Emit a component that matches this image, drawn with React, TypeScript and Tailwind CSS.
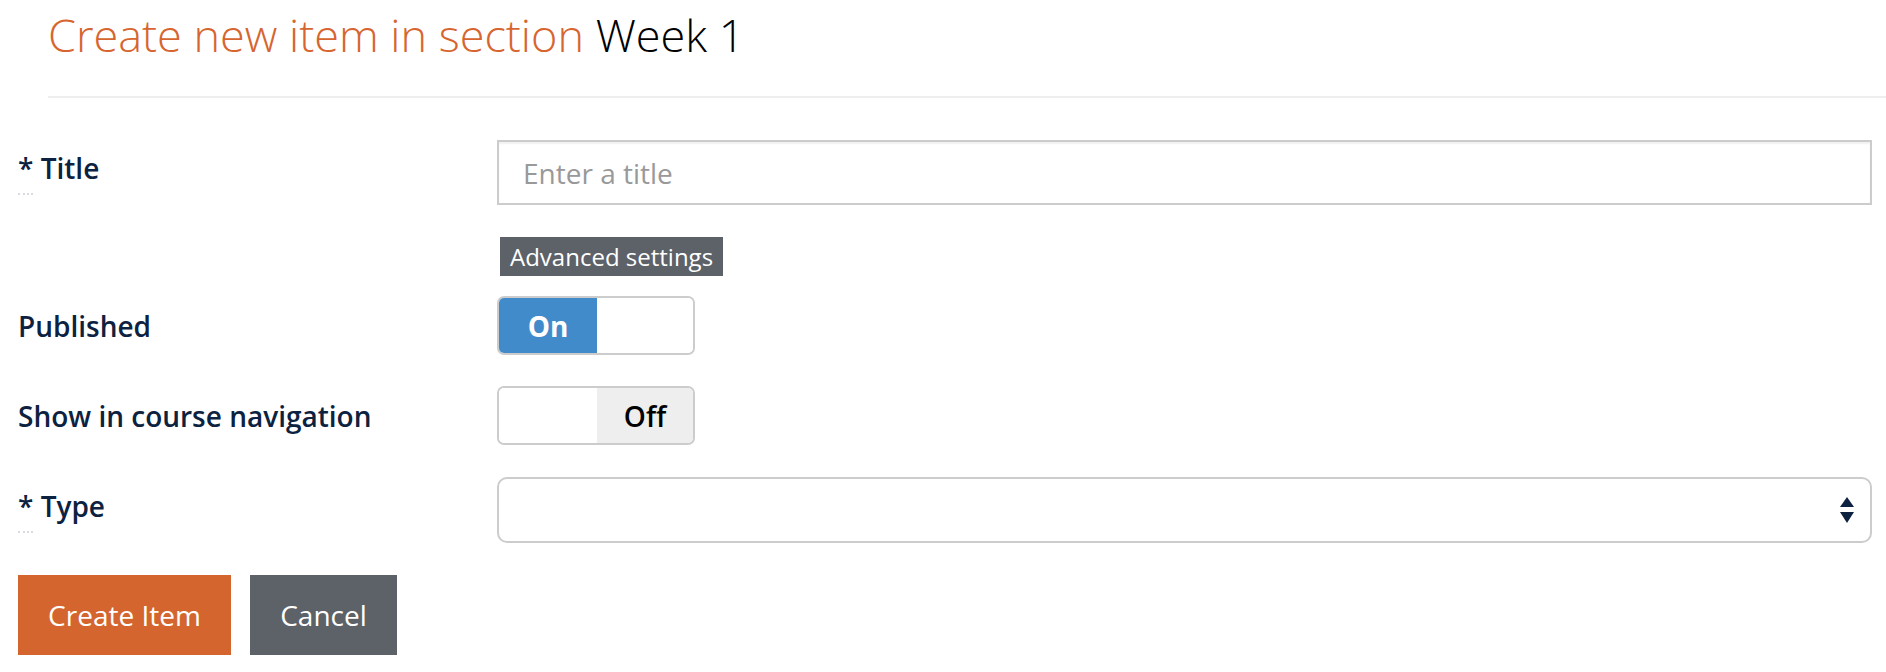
import React from "react";

const labelCls =
  "text-[28px] font-semibold text-[#0d2240] leading-[38px]";

function Req({ children }: { children: React.ReactNode }) {
  return (
    <span className={labelCls}>
      <span className="relative inline-block">
        *
        <span className="absolute left-0 right-0 -bottom-[8px] border-b-2 border-dotted border-[#d8dbe0]" />
      </span>{" "}
      {children}
    </span>
  );
}

function Toggle({ on }: { on: boolean }) {
  return (
    <div className="flex h-[59px] w-[198px] overflow-hidden rounded-[7px] border-2 border-[#cccccc] bg-white">
      {on ? (
        <>
          <div className="flex w-[98px] items-center justify-center bg-[#428bca] text-[28px] font-bold text-white">
            On
          </div>
          <div className="flex-1 bg-white" />
        </>
      ) : (
        <>
          <div className="w-[98px] bg-white" />
          <div className="flex flex-1 items-center justify-center bg-[#eeeeee] text-[28px] font-semibold text-black">
            Off
          </div>
        </>
      )}
    </div>
  );
}

export default function App() {
  return (
    <div
      className="min-h-[672px] w-full bg-white"
      style={{ fontFamily: '"Open Sans", "Noto Sans", sans-serif' }}
    >
      <div className="pl-[48px]">
        <h1 className="pt-[5px] text-[45px] font-light leading-[60px] text-[#d6652f]">
          Create new item in section <span className="text-black">Week 1</span>
        </h1>
        <div className="mt-[31px] h-[2px] bg-[#eeeeee]" />
      </div>

      <div className="flex flex-col pl-[18px] pr-[14px] pt-[42px]">
        <div className="grid grid-cols-[479px_1fr]">
          <div className="pt-[9px]">
            <Req>Title</Req>
          </div>
          <div className="flex h-[65px] items-center border-2 border-[#cccccc] bg-white pl-[24px] shadow-[inset_0_2px_2px_rgba(0,0,0,0.06)]">
            <span className="text-[28px] text-[#999999]">Enter a title</span>
          </div>
        </div>

        <div className="mt-[32px] grid grid-cols-[479px_1fr]">
          <div />
          <div className="pl-[3px]">
            <span className="inline-flex h-[39px] items-center bg-[#5d6168] px-[10px] text-[24px] text-white">
              Advanced settings
            </span>
          </div>
        </div>

        <div className="mt-[20px] grid grid-cols-[479px_1fr] items-center">
          <div className={labelCls}>Published</div>
          <Toggle on={true} />
        </div>

        <div className="mt-[31px] grid grid-cols-[479px_1fr] items-center">
          <div className={labelCls}>Show in course navigation</div>
          <Toggle on={false} />
        </div>

        <div className="mt-[32px] grid grid-cols-[479px_1fr]">
          <div className="pt-[10px]">
            <Req>Type</Req>
          </div>
          <div className="flex h-[66px] items-center justify-end rounded-[10px] border-2 border-[#cccccc] bg-white pr-[16px]">
            <svg width="14" height="26" viewBox="0 0 14 26">
              <polygon points="7,0 14,10 0,10" fill="#0d2240" />
              <polygon points="0,15 14,15 7,26" fill="#0d2240" />
            </svg>
          </div>
        </div>

        <div className="mt-[32px] flex gap-[19px]">
          <button className="flex h-[80px] w-[213px] items-center justify-center bg-[#d4652e] text-[28px] text-white">
            Create Item
          </button>
          <button className="flex h-[80px] w-[147px] items-center justify-center bg-[#5d6168] text-[28px] text-white">
            Cancel
          </button>
        </div>
      </div>
    </div>
  );
}
